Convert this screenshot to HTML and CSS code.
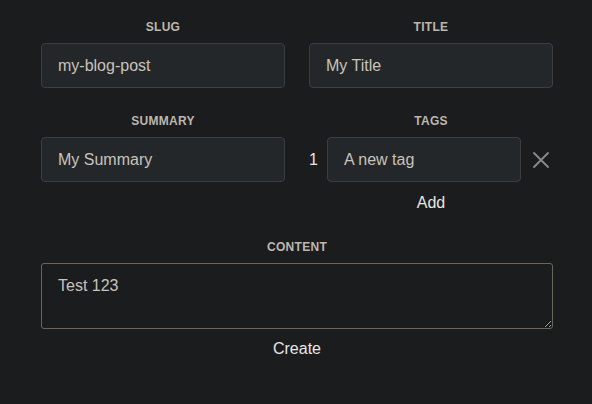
FILE: index.html
```html
<!DOCTYPE html>
<html lang="en">
<head>
<meta charset="utf-8">
<title>New post</title>
<link rel="stylesheet" href="styles.css">
</head>
<body>
<form class="form">
  <div class="row">
    <div class="field">
      <label class="label" for="slug">Slug</label>
      <input class="input" id="slug" type="text" value="my-blog-post">
    </div>
    <div class="field">
      <label class="label" for="title">Title</label>
      <input class="input" id="title" type="text" value="My Title">
    </div>
  </div>
  <div class="row row-second">
    <div class="field">
      <label class="label" for="summary">Summary</label>
      <input class="input" id="summary" type="text" value="My Summary">
    </div>
    <div class="field">
      <span class="label">Tags</span>
      <div class="tag-row">
        <span class="tag-num">1</span>
        <input class="input tag-input" type="text" value="A new tag">
        <button class="remove" type="button" aria-label="Remove tag">
          <svg width="24" height="24" viewBox="0 0 24 24" fill="none" stroke="currentColor" stroke-width="1.8" stroke-linecap="round"><path d="M5 5L19 19M19 5L5 19"/></svg>
        </button>
      </div>
      <button class="text-btn add" type="button">Add</button>
    </div>
  </div>
  <div class="field content">
    <label class="label" for="content">Content</label>
    <textarea class="textarea" id="content">Test 123</textarea>
  </div>
  <button class="text-btn create" type="submit">Create</button>
</form>
</body>
</html>
```
FILE: styles.css
```css
html, body {
  margin: 0;
  padding: 0;
  background: #1b1c1e;
}
body {
  font-family: "Liberation Sans", Arial, sans-serif;
  color: #e8e6e3;
}
.form {
  width: 512px;
  margin-left: 41px;
  padding-top: 20px;
  display: flex;
  flex-direction: column;
}
.row {
  display: grid;
  grid-template-columns: minmax(0, 1fr) minmax(0, 1fr);
  column-gap: 24px;
}
.row-second {
  margin-top: 26px;
}
.field {
  display: flex;
  flex-direction: column;
  min-width: 0;
}
.label {
  display: block;
  text-align: center;
  font-size: 12px;
  line-height: 14px;
  font-weight: bold;
  letter-spacing: 0.3px;
  text-transform: uppercase;
  color: #bdb7ae;
  margin-bottom: 9px;
}
.input {
  box-sizing: border-box;
  height: 45px;
  width: 100%;
  min-width: 0;
  margin: 0;
  padding: 0 16px;
  background: #242729;
  border: 1px solid #3a3e41;
  border-radius: 4px;
  color: #c8c3bc;
  font-family: "Liberation Sans", Arial, sans-serif;
  font-size: 16px;
  outline: none;
}
.tag-row {
  display: flex;
  align-items: center;
}
.tag-num {
  flex: none;
  width: 9px;
  margin-right: 9px;
  font-size: 16px;
  line-height: 18px;
  color: #e8e6e3;
}
.tag-input {
  flex: 1 1 0;
  width: 0;
}
.remove {
  flex: none;
  width: 24px;
  height: 24px;
  margin-left: 8px;
  padding: 0;
  border: 0;
  background: transparent;
  color: #8e8a84;
  display: flex;
  align-items: center;
  justify-content: center;
}
.text-btn {
  align-self: center;
  margin: 0;
  padding: 0;
  border: 0;
  background: transparent;
  color: #e8e6e3;
  font-family: "Liberation Sans", Arial, sans-serif;
  font-size: 16px;
  line-height: 18px;
}
.add {
  margin-top: 12px;
}
.content {
  margin-top: 28px;
}
.textarea {
  box-sizing: border-box;
  width: 100%;
  height: 66px;
  margin: 0;
  padding: 12px 16px;
  background: #1b1c1e;
  border: 1px solid #6b6457;
  border-radius: 3px;
  color: #c8c3bc;
  font-family: "Liberation Sans", Arial, sans-serif;
  font-size: 16px;
  line-height: 20px;
  outline: none;
  resize: vertical;
}
.create {
  margin-top: 11px;
}
```
